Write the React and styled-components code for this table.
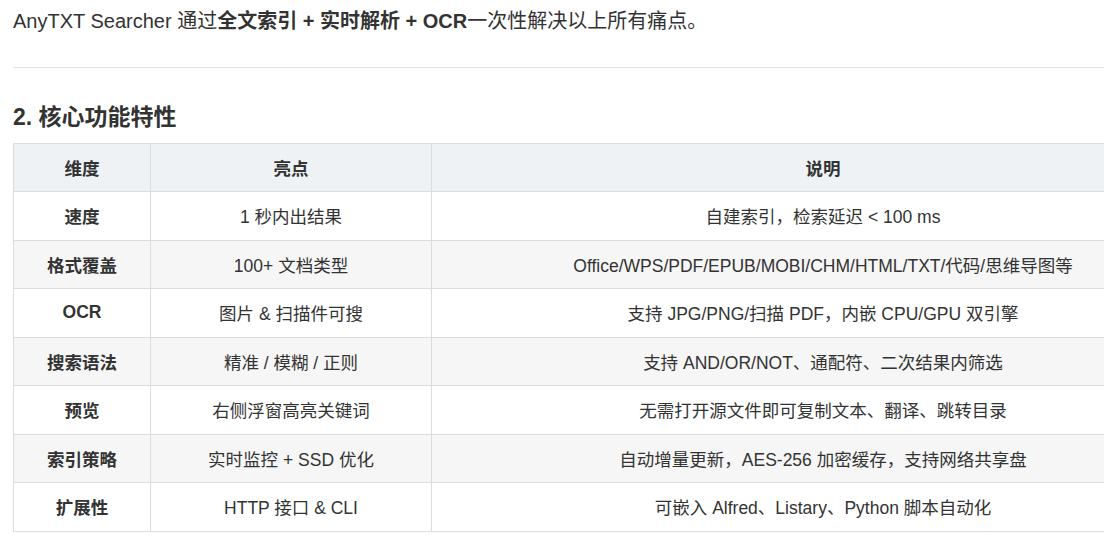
import React from "react";
import styled, { createGlobalStyle } from "styled-components";

const rows = [
  ["速度", "1 秒内出结果", "自建索引，检索延迟 < 100 ms"],
  ["格式覆盖", "100+ 文档类型", "Office/WPS/PDF/EPUB/MOBI/CHM/HTML/TXT/代码/思维导图等"],
  ["OCR", "图片 & 扫描件可搜", "支持 JPG/PNG/扫描 PDF，内嵌 CPU/GPU 双引擎"],
  ["搜索语法", "精准 / 模糊 / 正则", "支持 AND/OR/NOT、通配符、二次结果内筛选"],
  ["预览", "右侧浮窗高亮关键词", "无需打开源文件即可复制文本、翻译、跳转目录"],
  ["索引策略", "实时监控 + SSD 优化", "自动增量更新，AES-256 加密缓存，支持网络共享盘"],
  ["扩展性", "HTTP 接口 & CLI", "可嵌入 Alfred、Listary、Python 脚本自动化"],
];

const App = () => {
  return (
    <Page>
      <GlobalStyle />
      <Para>
        AnyTXT Searcher 通过<strong>全文索引 + 实时解析 + OCR</strong>一次性解决以上所有痛点。
      </Para>
      <Rule />
      <H2>2. 核心功能特性</H2>
      <Table>
        <colgroup>
          <col style={{ width: 137 }} />
          <col style={{ width: 281 }} />
          <col />
        </colgroup>
        <thead>
          <tr>
            <Th>维度</Th>
            <Th>亮点</Th>
            <Th>说明</Th>
          </tr>
        </thead>
        <tbody>
          {rows.map((r, i) => (
            <Row key={r[0]} $striped={i % 2 === 1}>
              <Td $bold>{r[0]}</Td>
              <Td>{r[1]}</Td>
              <Td>{r[2]}</Td>
            </Row>
          ))}
        </tbody>
      </Table>
    </Page>
  );
};
export default App;

const GlobalStyle = createGlobalStyle`
  html, body {
    margin: 0;
    padding: 0;
    background: #ffffff;
    overflow: hidden;
  }
  body {
    font-family: "Liberation Sans", Arial, "Noto Sans CJK SC", sans-serif;
    color: #333333;
    font-size: 16px;
  }
`;

const Page = styled.div`
  padding: 7px 0 0 13px;
  width: 1202px;
`;

const Para = styled.p`
  margin: 0;
  line-height: 28px;
  font-size: 20px;
  color: #333333;
  strong {
    font-weight: bold;
  }
`;

const Rule = styled.hr`
  border: none;
  border-top: 1px solid #e1e1e1;
  margin: 32px 0 0 0;
  width: 1091px;
`;

const H2 = styled.h2`
  margin: 34px 0 0 0;
  font-size: 23px;
  line-height: 30px;
  font-weight: bold;
  color: #333333;
  padding-bottom: 11px;
`;

const Table = styled.table`
  border-collapse: collapse;
  width: 1202px;
  table-layout: fixed;
`;

const Th = styled.th`
  background: #eef2f5;
  border: 1px solid #dcdcdc;
  height: 47px;
  padding: 0 13px;
  font-weight: bold;
  text-align: center;
  font-size: 17.5px;
  color: #333333;
`;

const Row = styled.tr`
  background: ${(p) => (p.$striped ? "#f6f6f6" : "#ffffff")};
`;

const Td = styled.td`
  border: 1px solid #dcdcdc;
  height: 47.5px;
  padding: 0 13px;
  text-align: center;
  font-size: 17.5px;
  color: #333333;
  font-weight: ${(p) => (p.$bold ? "bold" : "normal")};
  white-space: nowrap;
`;
